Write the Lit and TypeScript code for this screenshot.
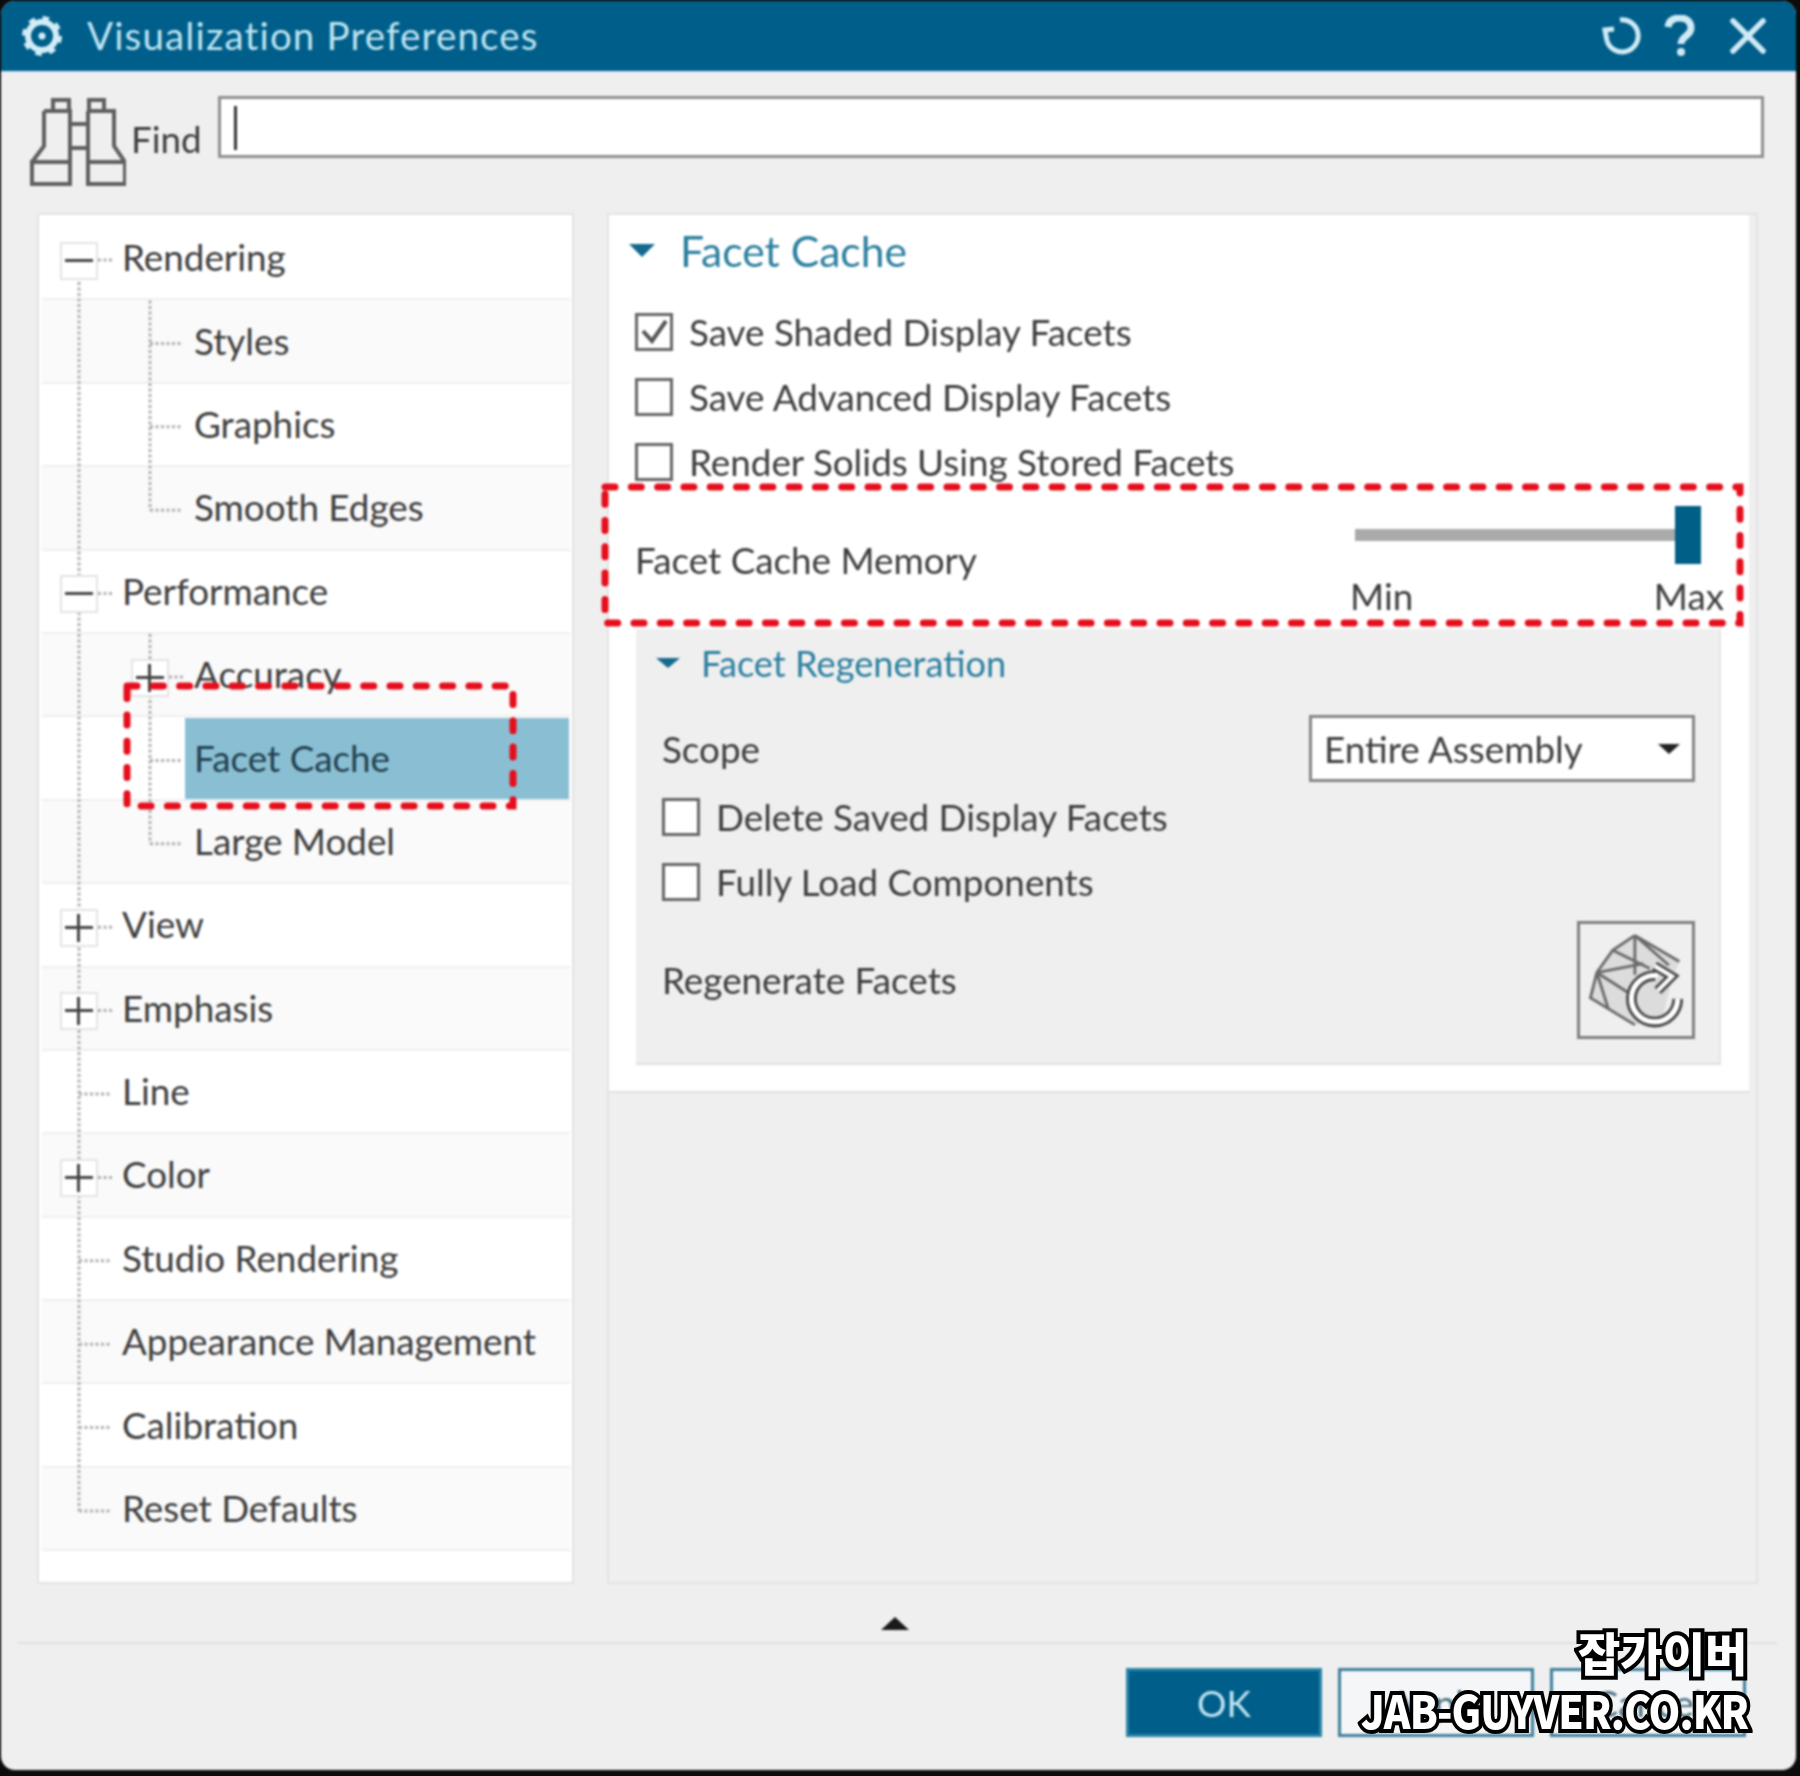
import { LitElement, html, css, svg } from "lit";
import { customElement } from "lit/decorators.js";

type Row = { t: string; l: 0 | 1; box?: "plus" | "minus"; sel?: boolean };
const ROWS: Row[] = [
  { t: "Rendering", l: 0, box: "minus" },
  { t: "Styles", l: 1 },
  { t: "Graphics", l: 1 },
  { t: "Smooth Edges", l: 1 },
  { t: "Performance", l: 0, box: "minus" },
  { t: "Accuracy", l: 1, box: "plus" },
  { t: "Facet Cache", l: 1, sel: true },
  { t: "Large Model", l: 1 },
  { t: "View", l: 0, box: "plus" },
  { t: "Emphasis", l: 0, box: "plus" },
  { t: "Line", l: 0 },
  { t: "Color", l: 0, box: "plus" },
  { t: "Studio Rendering", l: 0 },
  { t: "Appearance Management", l: 0 },
  { t: "Calibration", l: 0 },
  { t: "Reset Defaults", l: 0 },
];
const RH = 83.4;

@customElement("app-root")
export class AppRoot extends LitElement {
  static styles = css`
    :host { display: block; width: 1800px; height: 1776px; position: relative; background: #0c0c0c; overflow: hidden;
      font-family: "Lato", "Open Sans", sans-serif; color: #3d3d3d; font-size: 36.8px; }
    .dialog { position: absolute; left: 1px; top: 1px; width: 1795px; height: 1769px; background: #efefef; border-radius: 14px;
      display: flex; flex-direction: column; overflow: hidden; filter: blur(0.8px); }
    .title { height: 70px; flex: none; background: #005f8a; border-bottom: 2px solid #dbe9f1; display: flex; align-items: center;
      padding: 0 30px 0 20px; color: #bfe4f2; box-sizing: content-box; }
    .title .gear { width: 42px; height: 42px; margin-right: 24px; flex: none; }
    .title .name { flex: 1; font-size: 38.5px; letter-spacing: 1.15px; margin-top: -2px; }
    .title svg.act { flex: none; }
    .find { height: 140px; flex: none; display: flex; align-items: flex-start; padding: 24px 0 0 29px; box-sizing: border-box; }
    .find .bino { width: 96px; height: 88px; flex: none; margin-top: 1px; }
    .find .lbl { width: 92px; padding: 20px 0 0 5px; box-sizing: border-box; flex: none; }
    .find .inp { width: 1546px; height: 62px; background: #fff; border: 3px solid #8f8f8f; box-sizing: border-box; margin-top: -1px; padding: 7px 13px; }
    .find .cur { width: 3px; height: 44px; background: #333; }
    .main { display: flex; gap: 33px; padding-left: 36px; height: 1371px; flex: none; }
    .tree { position: relative; width: 537px; box-sizing: border-box; background: #fff; border: 2px solid #e3e3e3; padding: 2px 2px 0 3px; }
    .row { height: ${RH}px; box-sizing: border-box; border-bottom: 2px solid #efefef; display: flex; align-items: center; background: #fff; }
    .row.alt { background: #fafafa; }
    .row.l0 { padding-left: 18px; }
    .row.l1 { padding-left: 89px; }
    .box { position: relative; top: 3px; z-index: 2; width: 38px; height: 38px; flex: none; margin-right: 15px; box-sizing: border-box; }
    .box.on { background: #fff; border: 2px solid #e4e4e4; }
    .box.on::before { content: ""; position: absolute; left: 3px; right: 3px; top: 15px; height: 3px; background: #444; }
    .box.plus::after { content: ""; position: absolute; top: 3px; bottom: 3px; left: 15px; width: 3px; background: #444; }
    .lab { flex: 1; align-self: stretch; display: flex; align-items: center; padding-left: 9px; margin: 1px 1px 0 1px; white-space: nowrap; padding-bottom: 2px; }
    .row:not(.l1) .lab { margin-left: 0; }
    .lab.sel { background: #8abfd3; color: #22404f; }
    .lines { position: absolute; left: 0; top: 0; width: 533px; height: 1367px; z-index: 1; pointer-events: none; }
    .right { width: 1151px; box-sizing: border-box; border: 2px solid #e3e3e3; display: flex; flex-direction: column; }
    .sec { width: 1140px; height: 878px; box-sizing: border-box; background: #fff; border-bottom: 2px solid #e0e0e0; padding: 0 27px 0 26px; }
    .hd { display: flex; align-items: center; color: #2a7f9f; }
    .hd.big { height: 70px; margin-left: -6px; gap: 25px; font-size: 42.6px; }
    .hd.small { height: 67px; gap: 21px; font-size: 36.2px; margin-left: -6px; }
    .tri { width: 0; height: 0; flex: none; border-left: 13px solid transparent; border-right: 13px solid transparent; border-top: 13px solid #14698e; }
    .hd.small .tri { border-left-width: 12px; border-right-width: 12px; border-top-width: 10px; }
    .chk { display: flex; align-items: center; gap: 16px; height: 37px; margin-bottom: 28px; }
    .chk i { width: 38px; height: 38px; box-sizing: border-box; border: 3px solid #666; background: #fff; flex: none; display: block; }
    .chk i svg { display: block; width: 32px; height: 32px; }
    .chks { padding-top: 28px; height: 198px; box-sizing: border-box; }
    .mem { height: 138px; display: flex; align-items: flex-start; }
    .mem > span { flex: 1; margin-top: 55px; }
    .slider { width: 372px; flex: none; height: 117px; margin: 23px 0 0 0; display: flex; flex-direction: column; }
    .tr { height: 58px; padding-left: 5px; display: flex; align-items: center; flex: none; }
    .tr b { display: block; width: 320px; height: 12px; background: #aaa; }
    .tr u { display: block; width: 26px; height: 58px; background: #005f87; }
    .mm { display: flex; justify-content: space-between; padding-top: 10px; margin-right: -2px; }
    .grey { margin: 8px 0 0 1px; width: 1085px; height: 436px; background: #efefef; box-sizing: border-box; border-right: 2px solid #e4e4e4; border-bottom: 2px solid #dfdfdf; padding: 0 24px 0 26px; }
    .fld { display: flex; align-items: center; justify-content: space-between; }
    .fld.scope { height: 67px; margin: 19px 0 16px 0; }
    .dd { width: 386px; height: 67px; box-sizing: border-box; background: #fff; border: 3px solid #858585; display: flex; align-items: center; justify-content: space-between; padding: 0 12px 0 12px; }
    .dd em { width: 0; height: 0; border-left: 11px solid transparent; border-right: 11px solid transparent; border-top: 10px solid #222; }
    .grey .chks2 { height: 123px; }
    .fld.regen { height: 118px; }
    .btn { width: 118px; height: 118px; box-sizing: border-box; border: 3px solid #7e7e7e; }
    .btn svg { display: block; width: 112px; height: 112px; }
    .foot { flex: 1; display: flex; flex-direction: column; }
    .up { height: 60px; display: flex; justify-content: center; align-items: flex-start; padding-top: 27px; box-sizing: border-box; padding-right: 6px; flex: none; border-bottom: 2px solid #dfdfdf; margin: 0 19px 0 17px; }
    .up em { width: 0; height: 0; border-left: 14px solid transparent; border-right: 14px solid transparent; border-bottom: 13px solid #1a1a1a; margin-top: 6px; }
    .btns { display: flex; justify-content: flex-end; gap: 16px; padding: 24px 50px 0 0; }
    .b { width: 196px; height: 69px; box-sizing: border-box; display: flex; align-items: center; justify-content: center; border: 3px solid #3f7f9d; background: #f4f6f7; color: #4a6f82; }
    .b.ok { background: #005f8a; border-color: #2a84a8; color: #bfe4f2; }
    .dash { position: absolute; left: 0; top: 0; width: 1795px; height: 1769px; pointer-events: none; z-index: 5; }
    .wm { position: absolute; font-family: "Noto Sans CJK KR", "Liberation Sans", sans-serif; font-weight: 900; color: #fff; -webkit-text-stroke: 8px #000; paint-order: stroke fill; white-space: nowrap; line-height: 1; }
    .wm.a { left: 1578px; top: 1628px; font-size: 46px; }
    .wm.b2 { left: 1361px; top: 1686px; font-size: 46px; letter-spacing: -1px; transform: scaleX(0.88); transform-origin: left center; }
  `;

  lines() {
    const top = 2, c = (i: number) => top + RH * i + 43;
    const X0 = 79 - 39, X1 = 150 - 39;
    const segs: string[] = [];
    segs.push(`M${X0} ${c(0)}V${c(15)}`);
    segs.push(`M${X1} ${top + RH}V${c(3)}`);
    segs.push(`M${X1} ${top + RH * 5}V${c(7)}`);
    ROWS.forEach((r, i) => {
      const x = r.l ? X1 : X0;
      segs.push(r.box ? `M${x + 19} ${c(i)}h14` : `M${x} ${c(i)}h32`);
    });
    return svg`<path d=${segs.join("")} fill="none" stroke="#b0b0b0" stroke-width="3" stroke-dasharray="3 2.5"/>`;
  }

  render() {
    return html`
      <div class="dialog">
        <div class="title">
          <svg class="gear" viewBox="0 0 42 42">
            <circle cx="21" cy="21" r="14" fill="none" stroke="#d2edf7" stroke-width="6"/>
            <circle cx="21" cy="21" r="17" fill="none" stroke="#d2edf7" stroke-width="6" stroke-dasharray="6.2 7.15"/>
            <circle cx="21" cy="21" r="3.5" fill="#d2edf7"/>
          </svg>
          <span class="name">Visualization Preferences</span>
          <svg class="act" width="42" height="42" viewBox="0 0 42 42" style="margin-right:20px">
            <path d="M19 5A16 16 0 1 1 6 26" fill="none" stroke="#cfeaf5" stroke-width="5"/>
            <path d="M13 14L4 15 6 26" fill="none" stroke="#cfeaf5" stroke-width="5"/>
          </svg>
          <svg class="act" width="34" height="42" viewBox="0 0 34 42" style="margin-right:33px">
            <path d="M5 12C6 4 13 3 17 3c7 0 11 4 11 10 0 8-10 8-10 16" fill="none" stroke="#cfeaf5" stroke-width="7"/>
            <circle cx="18" cy="37" r="4" fill="#cfeaf5"/>
          </svg>
          <svg class="act" width="36" height="36" viewBox="0 0 36 36">
            <path d="M3 3L33 33M33 3L3 33" fill="none" stroke="#cfeaf5" stroke-width="5.5" stroke-linecap="round"/>
          </svg>
        </div>
        <div class="find">
          <svg class="bino" viewBox="0 0 96 88" fill="none" stroke="#5f5f5f" stroke-width="4">
            <path d="M23 13V2H39V13M14 13H40V64H2V86H40V64M14 13V48L2 64"/>
            <path d="M59 13V2H74V13M58 13H84V48L95 64H58V86H95V64M58 13V64"/>
            <path d="M40 26H58M40 50H58"/>
          </svg>
          <div class="lbl">Find</div>
          <div class="inp"><div class="cur"></div></div>
        </div>
        <div class="main">
          <div class="tree">
            <svg class="lines" viewBox="0 0 533 1367">${this.lines()}</svg>
            ${ROWS.map((r, i) => html`
              <div class="row l${r.l} ${i % 2 ? "alt" : ""}">
                <span class="box ${r.box ? "on " + r.box : ""}"></span>
                <span class="lab ${r.sel ? "sel" : ""}">${r.t}</span>
              </div>`)}
          </div>
          <div class="right">
            <div class="sec">
              <div class="hd big"><span class="tri"></span><span>Facet Cache</span></div>
              <div class="chks">
                <div class="chk"><i><svg viewBox="0 0 32 32"><path d="M5 15l9 10L28 5" fill="none" stroke="#555" stroke-width="4"/></svg></i><span>Save Shaded Display Facets</span></div>
                <div class="chk"><i></i><span>Save Advanced Display Facets</span></div>
                <div class="chk"><i></i><span>Render Solids Using Stored Facets</span></div>
              </div>
              <div class="mem">
                <span>Facet Cache Memory</span>
                <div class="slider">
                  <div class="tr"><b></b><u></u></div>
                  <div class="mm"><span>Min</span><span>Max</span></div>
                </div>
              </div>
              <div class="grey">
                <div class="hd small"><span class="tri"></span><span>Facet Regeneration</span></div>
                <div class="fld scope"><span>Scope</span><div class="dd"><span>Entire Assembly</span><em></em></div></div>
                <div class="chks2">
                  <div class="chk"><i></i><span>Delete Saved Display Facets</span></div>
                  <div class="chk"><i></i><span>Fully Load Components</span></div>
                </div>
                <div class="fld regen"><span>Regenerate Facets</span>
                  <div class="btn"><svg viewBox="0 0 353 353">
                    <path d="M173 36L313 118 290 170 260 300 173 318 33 233 53 153 103 83Z" fill="#dcdcdc" stroke="none"/>
                    <path d="M173 36L313 118M173 36L103 83 53 153 33 233 173 318M173 36V160M103 83L220 140M53 153L200 125M53 153L150 215M53 153L90 270M173 36L280 130" fill="none" stroke="#6a6a6a" stroke-width="9"/>
                    <g fill="none" stroke-linejoin="miter">
                      <path d="M308 236A73 73 0 1 1 238 163" stroke="#4a4a4a" stroke-width="34"/>
                      <path d="M235 132L290 165 245 210" stroke="#4a4a4a" stroke-width="30"/>
                      <path d="M308 236A73 73 0 1 1 245 163" stroke="#fff" stroke-width="16"/>
                      <path d="M235 132L290 165 245 210" stroke="#fff" stroke-width="13"/>
                    </g>
                  </svg></div>
                </div>
              </div>
            </div>
          </div>
        </div>
        <div class="foot">
          <div class="up"><em></em></div>
          <div class="btns">
            <div class="b ok">OK</div>
            <div class="b">Apply</div>
            <div class="b">Cancel</div>
          </div>
        </div>
        <svg class="dash" viewBox="0 0 1795 1769" fill="none" stroke="#e50e1c" stroke-width="7" stroke-linecap="round" stroke-dasharray="10 16.3">
          <rect x="604" y="486" width="1135" height="136" />
          <rect x="126" y="685" width="386" height="120" />
        </svg>
      </div>
      <div class="wm a">잡가이버</div>
      <div class="wm b2">JAB-GUYVER.CO.KR</div>
    `;
  }
}
